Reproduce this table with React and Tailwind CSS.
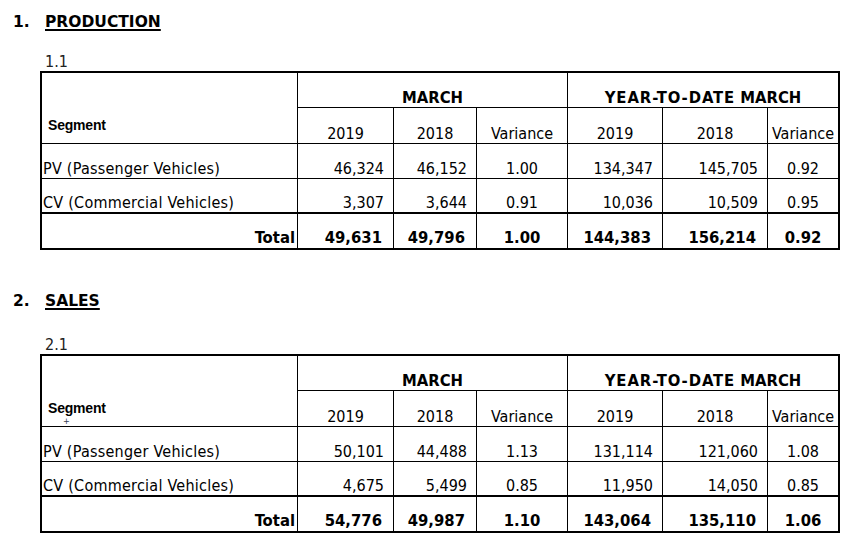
import React from "react";

const sections = [
  {
    num: "1.",
    title: "PRODUCTION",
    sub: "1.1",
    rows: [
      ["PV (Passenger Vehicles)", "46,324", "46,152", "1.00", "134,347", "145,705", "0.92"],
      ["CV (Commercial Vehicles)", "3,307", "3,644", "0.91", "10,036", "10,509", "0.95"],
    ],
    total: ["49,631", "49,796", "1.00", "144,383", "156,214", "0.92"],
  },
  {
    num: "2.",
    title: "SALES",
    sub: "2.1",
    rows: [
      ["PV (Passenger Vehicles)", "50,101", "44,488", "1.13", "131,114", "121,060", "1.08"],
      ["CV (Commercial Vehicles)", "4,675", "5,499", "0.85", "11,950", "14,050", "0.85"],
    ],
    total: ["54,776", "49,987", "1.10", "143,064", "135,110", "1.06"],
    mark: true,
  },
];

// variance columns are centred, the rest right aligned
const isVar = (i) => i === 2 || i === 5;

const DataTable = ({ section }) => (
  <div className="ml-[40px] w-[800px] border-2 border-black grid grid-cols-[256px_96px_83px_91px_95px_105px_70px] grid-rows-[35px_36px_35px_35px_34px] text-[16px] leading-[18px] font-['DejaVu_Sans_Condensed','DejaVu_Sans',sans-serif]">
    <div className="relative row-span-2 border-r border-b border-black flex items-end pl-[6px] pb-[10px]">
      <span className="font-['Liberation_Sans',Arial,sans-serif] font-bold text-[14px] leading-[16px] tracking-[-0.2px]">
        Segment
      </span>
      {section.mark && (
        <span className="absolute left-[21px] top-[61px] text-[9px] leading-none text-gray-700">+</span>
      )}
    </div>
    <div className="col-span-3 border-r border-b border-black flex items-end justify-center font-bold text-[16.5px]">
      MARCH
    </div>
    <div className="col-span-3 border-b border-black flex items-end justify-center font-bold text-[16.5px]">
      <span className="tracking-[0.9px]">YEAR-TO-DATE</span>&nbsp;MARCH
    </div>
    {["2019", "2018", "Variance", "2019", "2018", "Variance"].map((h, i) => (
      <div
        key={i}
        className={`border-b border-black flex items-end justify-center ${i < 5 ? "border-r" : ""}`}
      >
        {h}
      </div>
    ))}
    {section.rows.map((row, r) => (
      <React.Fragment key={r}>
        {row.map((cell, i) => (
          <div
            key={i}
            className={`border-black flex items-end ${r === 1 ? "border-b-2" : "border-b"} ${
              i < 6 ? "border-r" : ""
            } ${
              i === 0
                ? "pl-[1px] tracking-[0.25px]"
                : isVar(i - 1)
                ? "justify-center"
                : "justify-end pr-[9px]"
            }`}
          >
            {cell}
          </div>
        ))}
      </React.Fragment>
    ))}
    <div className="border-r border-black flex items-end justify-end pr-[2px] pb-[1px] font-bold text-[16.5px]">
      Total
    </div>
    {section.total.map((cell, i) => (
      <div
        key={i}
        className={`border-black flex items-end pb-[1px] font-bold text-[16.5px] ${i < 5 ? "border-r" : ""} ${
          isVar(i) ? "justify-center" : "justify-end pr-[11px]"
        }`}
      >
        {cell}
      </div>
    ))}
  </div>
);

export default function App() {
  return (
    <div className="w-[850px] h-[542px] bg-white text-black font-['DejaVu_Sans',Verdana,sans-serif] overflow-hidden pt-[12px]">
      {sections.map((s, idx) => (
        <section key={s.title} className={idx === 1 ? "mt-[41px]" : ""}>
          <h2 className="flex pl-[13px] h-[20px] leading-[20px] text-[15.5px] font-bold">
            <span className="w-[32px]">{s.num}</span>
            <span className="underline decoration-[1.5px] underline-offset-[2px]">{s.title}</span>
          </h2>
          <div
            className={`pl-[45px] h-[18px] leading-[18px] text-[16px] text-[#222] font-['DejaVu_Sans_Condensed','DejaVu_Sans',sans-serif] ${
              idx === 1 ? "mt-[25px]" : "mt-[21px]"
            }`}
          >
            {s.sub}
          </div>
          <DataTable section={s} />
        </section>
      ))}
    </div>
  );
}
